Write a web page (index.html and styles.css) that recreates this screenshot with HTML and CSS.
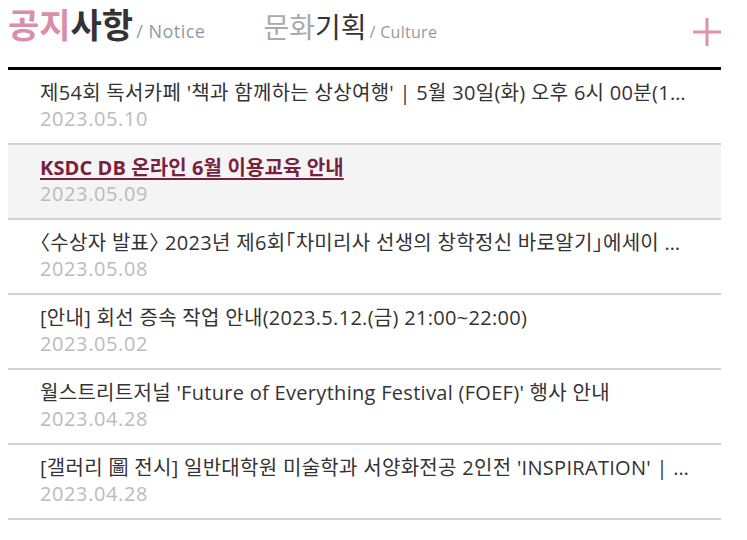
FILE: index.html
```html
<!DOCTYPE html>
<html lang="ko">
<head>
<meta charset="utf-8">
<link rel="stylesheet" href="styles.css">
</head>
<body>
<div class="board">
  <div class="tabs">
    <div class="tab active"><span class="hl">공지</span><span class="rest">사항</span><span class="sub">/ Notice</span></div>
    <div class="tab culture"><span class="hl">문화</span><span class="rest">기획</span><span class="sub">/ Culture</span></div>
    <a class="more" href="#" aria-label="more">
      <svg width="28" height="28" viewBox="0 0 28 28"><rect x="12.5" y="0" width="3" height="28" fill="#dc93ab"/><rect x="0" y="12.5" width="28" height="3" fill="#dc93ab"/></svg>
    </a>
  </div>
  <ul class="list">
    <li class="item"><a class="title" href="#">제54회 독서카페 '책과 함께하는 상상여행' | 5월 30일(화) 오후 6시 00분(18:00)~8시 00분</a><span class="date">2023.05.10</span></li>
    <li class="item on"><a class="title" href="#">KSDC DB 온라인 6월 이용교육 안내</a><span class="date">2023.05.09</span></li>
    <li class="item"><a class="title" href="#">〈수상자 발표〉 2023년 제6회「차미리사 선생의 창학정신 바로알기」에세이 공모전</a><span class="date">2023.05.08</span></li>
    <li class="item"><a class="title" href="#">[안내] 회선 증속 작업 안내(2023.5.12.(금) 21:00~22:00)</a><span class="date">2023.05.02</span></li>
    <li class="item"><a class="title" href="#">월스트리트저널 'Future of Everything Festival (FOEF)' 행사 안내</a><span class="date">2023.04.28</span></li>
    <li class="item"><a class="title" href="#">[갤러리 圖 전시] 일반대학원 미술학과 서양화전공 2인전 'INSPIRATION' | 2023.5.1~5.12</a><span class="date">2023.04.28</span></li>
  </ul>
</div>
</body>
</html>
```

FILE: styles.css
```css
* { box-sizing: border-box; }
html, body { margin: 0; padding: 0; background: #fff; }
body {
  font-family: "Open Sans", "Noto Sans CJK KR", sans-serif;
  padding: 0 26px 0 8px;
}
.board { width: 713px; }
.tabs {
  display: flex;
  align-items: flex-start;
  height: 70px;
  padding-top: 3px;
  border-bottom: 3px solid #000;
}
.tab {
  display: flex;
  align-items: baseline;
  font-family: "Noto Sans CJK KR", sans-serif;
  font-size: 34px;
  line-height: 42px;
  margin-right: 58px;
}
.tab .hl { color: #aaa; }
.tab .rest { color: #333; }
.tab .sub {
  font-family: "Open Sans", sans-serif;
  font-size: 16px;
  letter-spacing: 0.3px;
  color: #999;
  margin-left: 3px;
}
.tab.active { font-weight: 700; }
.tab.active .hl { color: #d98fa8; }
.tab.active .sub { font-size: 18px; letter-spacing: 0.5px; font-weight: 400; color: #8f99a6; }
.tab.culture { font-size: 28px; letter-spacing: 0; padding-top: 2px; }
.more {
  margin-left: auto;
  margin-top: 15px;
  display: block;
  line-height: 0;
}
.list { list-style: none; margin: 0; padding: 0; }
.item {
  display: flex;
  flex-direction: column;
  padding: 9px 30px 10px 32px;
  border-bottom: 2px solid #d2d2d2;
  height: 75px;
}
.item.on { background: #f4f4f4; }
.title {
  font-size: 20px;
  line-height: 28px;
  letter-spacing: 0.3px;
  font-feature-settings: "halt";
  color: #333;
  text-decoration: none;
  white-space: nowrap;
  overflow: hidden;
  text-overflow: ellipsis;
}
.item.on .title {
  color: #7a1f3d;
  font-weight: 700;
  letter-spacing: 0.1px;
  text-decoration: underline;
  text-underline-offset: 3px;
}
.date {
  font-size: 20px;
  line-height: 24px;
  letter-spacing: 0.6px;
  color: #bbb;
}
```
